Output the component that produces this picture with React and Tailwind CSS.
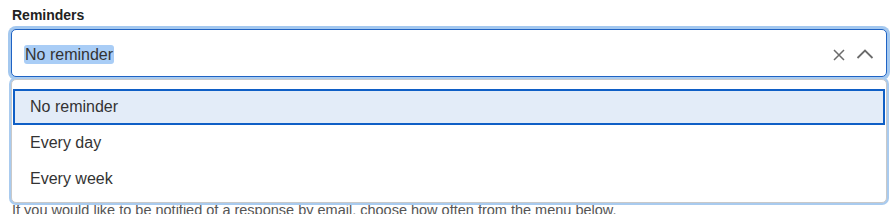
const options = ['No reminder', 'Every day', 'Every week']

function App() {
    return (
        <div className="bg-white h-[214px] overflow-hidden pl-[11px] pr-[7px] pt-[5px] font-['Liberation_Sans',Arial,sans-serif]">
            <label className="block pl-[1px] text-[14px] leading-[20px] font-bold text-[#222]">Reminders</label>
            <div className="relative mt-[4px]">
                <div className="flex h-[48px] items-center rounded-[5px] border border-[#1f63c4] bg-white pl-[12px] pr-[12px] ring-[3px] ring-[#a4c8ef]">
                    <span className="flex-1 pt-[4px] text-[16px] leading-[18px] text-[#333]">
                        <span className="rounded-[3px] bg-[#a9cdf6] px-[1px] py-[1px]">No reminder</span>
                    </span>
                    <svg width="14" height="14" viewBox="0 0 14 14" className="mr-[10px] mt-[3px]" fill="none" stroke="#6b6b6b" strokeWidth="1.5">
                        <path d="M2 2 L12 12 M12 2 L2 12" />
                    </svg>
                    <svg width="18" height="10" viewBox="0 0 18 10" className="mt-[2px]" fill="none" stroke="#6b6b6b" strokeWidth="1.8">
                        <path d="M1.5 9 L9 1.5 L16.5 9" />
                    </svg>
                </div>
                <div className="absolute left-0 right-0 top-[50px] z-10 rounded-[5px] border border-[#c9c9c9] bg-white px-[1px] pt-[9px] pb-[5px] ring-2 ring-[#a9cbef]">
                    {options.map((o, i) => (
                        <div
                            key={o}
                            className={i === 0
                                ? 'flex h-[36px] items-center border-2 border-[#0f5fc6] bg-[#e3ecf8] pl-[15px] text-[16px] text-[#333]'
                                : 'flex h-[36px] items-center pl-[17px] text-[16px] text-[#333]'}
                        >
                            {o}
                        </div>
                    ))}
                </div>
            </div>
            <p className="mt-[123px] pl-[1px] text-[14.5px] leading-[20px] text-[#555]">
                If you would like to be notified of a response by email, choose how often from the menu below.
            </p>
        </div>
    )
}

export default App
